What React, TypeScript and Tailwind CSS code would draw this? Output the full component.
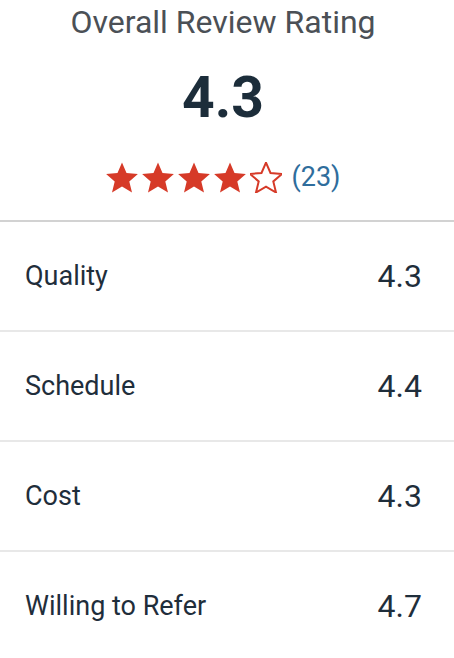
const criteria = [
  { label: 'Quality', score: '4.3' },
  { label: 'Schedule', score: '4.4' },
  { label: 'Cost', score: '4.3' },
  { label: 'Willing to Refer', score: '4.7' },
]

const STAR =
  '16,0.6 20.5,11 31.9,11.9 23.3,19.4 26,30.5 16,24.6 6,30.5 8.7,19.4 0.1,11.9 11.5,11'

function Star({ filled }: { filled: boolean }) {
  return (
    <svg width="32" height="31" viewBox="0 0 32 31" className="shrink-0">
      <polygon
        points={STAR}
        fill={filled ? '#d63a28' : 'none'}
        stroke="#d63a28"
        strokeWidth={filled ? 0 : 2}
        strokeLinejoin="miter"
      />
    </svg>
  )
}

export default function App() {
  return (
    <div className="w-[454px] h-[658px] bg-white overflow-hidden font-['Roboto',sans-serif]">
      <div className="flex flex-col items-center pr-2 pt-[2px]">
        <h2 className="text-[32px] leading-[40px] text-[#4b5056]">Overall Review Rating</h2>
        <div className="mt-[23px] text-[57px] leading-[66px] font-bold text-[#1c2d3a]">4.3</div>
        <div className="mt-[29px] flex items-center">
          <div className="flex gap-[4px]">
            {[0, 1, 2, 3, 4].map((i) => (
              <Star key={i} filled={i < 4} />
            ))}
          </div>
          <span className="ml-[10px] text-[27px] leading-[34px] text-[#2f6d9c]">(23)</span>
        </div>
      </div>

      <div className="mt-[26px] border-t-2 border-[#d2d2d2]">
        {criteria.map((c) => (
          <div
            key={c.label}
            className="h-[110px] flex items-center justify-between pl-[25px] pr-[32px] border-b-2 border-[#e8e8e8] text-[#1f2e3b]"
          >
            <span className="text-[27px]">{c.label}</span>
            <span className="text-[32px]">{c.score}</span>
          </div>
        ))}
      </div>
    </div>
  )
}
